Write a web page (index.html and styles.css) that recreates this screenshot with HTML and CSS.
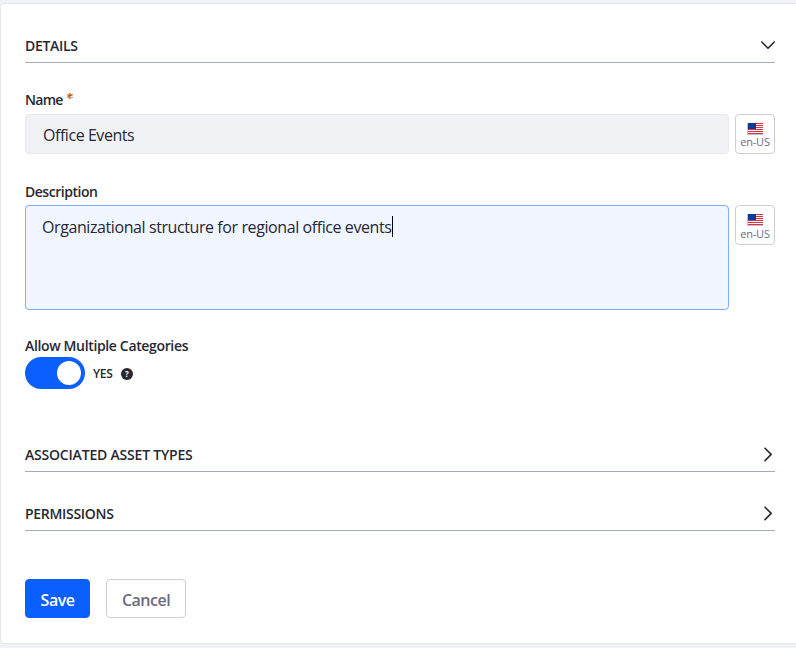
FILE: index.html
```
<!DOCTYPE html>
<html lang="en">
<head>
<meta charset="utf-8">
<title>Details</title>
<link rel="stylesheet" href="styles.css">
</head>
<body>
<svg class="defs" width="0" height="0" aria-hidden="true">
  <symbol id="flag" viewBox="0 0 16 12">
    <path fill="#fff" d="M0 0h16v12H0z"/>
    <path fill="#d9333f" d="M1 0h15v1H1zM1 2h15v1H1zM1 4h15v1H1zM1 6h15v1H1zM1 8h15v1H1zM1 10h15v1H1z"/>
    <path fill="#0a3a9a" d="M1 0h8v6H1z"/>
    <path fill="#b7c3d3" d="M0 0h1v12H0zM1 11h15v1H1z"/>
  </symbol>
</svg>
<form class="card">
  <div class="panel-header details"><span class="t-details">DETAILS</span>
    <svg class="chevron" viewBox="0 0 16 16"><path d="M1.800 5 8 11.200 14.200 5"/></svg>
  </div>
  <div class="label name-label"><span class="t-name">Name</span><svg class="star" viewBox="0 0 6 6"><path d="M3 0v6M.3 1.500l5.400 3M5.700 1.500l-5.400 3"/></svg></div>
  <div class="row">
    <div class="field input"><span class="t-office">Office Events</span></div>
    <button type="button" class="locale"><svg class="flag"><use href="#flag"/></svg><span>en-US</span></button>
  </div>
  <div class="label desc-label"><span class="t-desc">Description</span></div>
  <div class="row">
    <div class="field textarea"><span class="t-body">Organizational structure for regional office events</span><i class="caret"></i></div>
    <button type="button" class="locale second"><svg class="flag"><use href="#flag"/></svg><span>en-US</span></button>
  </div>
  <div class="label multi-label"><span class="t-multi">Allow Multiple Categories</span></div>
  <div class="toggle-row">
    <span class="toggle"><span class="knob"></span></span>
    <span class="yes">YES</span>
    <span class="help">?</span>
  </div>
  <div class="panel-header assets"><span class="t-assets">ASSOCIATED ASSET TYPES</span>
    <svg class="chevron" viewBox="0 0 16 16"><path d="M5 2.200l6.200 6.200L5 14.600"/></svg>
  </div>
  <div class="panel-header permissions"><span class="t-perm">PERMISSIONS</span>
    <svg class="chevron" viewBox="0 0 16 16"><path d="M5 2.200l6.200 6.200L5 14.600"/></svg>
  </div>
  <div class="actions">
    <button type="button" class="btn save"><span class="t-save">Save</span></button>
    <button type="button" class="btn cancel"><span class="t-cancel">Cancel</span></button>
  </div>
</form>
</body>
</html>
```
FILE: styles.css
```
* { box-sizing: border-box; }
html, body { margin: 0; height: 648px; overflow: hidden; }
body { background: #f1f2f5; color: #272833; font-family: "Open Sans", "Noto Sans", sans-serif; padding-top: 3px; }
.defs { position: absolute; }
.card { width: 800px; height: 641px; background: #fff; border: 1px solid #e7e7ed; border-radius: 4px; padding: 24px; }
.panel-header { display: flex; justify-content: space-between; align-items: center; height: 35px; padding-top: 2px; border-bottom: 1px solid #a7a9bc; font-size: 14px; font-weight: 570; line-height: 20px; white-space: nowrap; }
.chevron { width: 16px; height: 16px; margin: -3px -1px 0 0; fill: none; stroke: #272833; stroke-width: 1.600; stroke-linecap: round; stroke-linejoin: round; }
.label { display: flex; height: 20px; font-size: 14px; font-weight: 580; line-height: 20px; white-space: nowrap; }
.name-label { margin-top: 27px; margin-bottom: 4px; }
.desc-label { margin-top: 28px; margin-bottom: 3px; }
.multi-label { margin-top: 26px; margin-bottom: 1px; }
.t-details { letter-spacing: -.32px; }
.t-name { letter-spacing: -.7px; }
.t-office { letter-spacing: -.45px; }
.t-desc { letter-spacing: -.48px; }
.t-body { letter-spacing: -.41px; }
.t-multi { letter-spacing: -.35px; }
.t-assets { letter-spacing: -.2px; }
.t-perm { letter-spacing: -.3px; }
.t-save, .t-cancel { letter-spacing: -.5px; }
.star { width: 6px; height: 6px; margin: 3px 0 0 4px; stroke: #b95000; stroke-width: 1.200; }
.row { display: flex; align-items: flex-start; gap: 6px; }
.field { flex: 1; display: flex; align-items: center; border: 1px solid #e7e7ed; border-radius: 4px; font-size: 16px; line-height: 24px; white-space: nowrap; }
.input { height: 40px; padding: 2px 17px 0; background: #f1f2f5; }
.textarea { height: 105px; align-items: flex-start; padding: 9px 16px; background: #f0f5ff; border-color: #80acff; }
.caret { width: 1px; height: 21px; margin-top: 1px; background: #000; }
.locale { display: flex; flex-direction: column; align-items: center; width: 40px; height: 40px; padding: 8px 0 0; background: #fff; border: 1px solid #cdced9; border-radius: 4px; color: #6b6c7e; font: 11px/14px "Open Sans", "Noto Sans", sans-serif; letter-spacing: -.2px; }
.second span { margin-top: 1px; }
.flag { display: block; flex: none; width: 16px; height: 12px; }
.toggle-row { display: flex; align-items: center; height: 32px; }
.toggle { display: flex; align-items: center; justify-content: flex-end; width: 60px; height: 32px; padding-right: 4px; border-radius: 16px; background: #0b5fff; }
.knob { width: 24px; height: 24px; border-radius: 50%; background: #fff; }
.yes { width: 20px; margin-left: 8px; font-size: 12px; font-weight: 560; letter-spacing: -.3px; }
.help { width: 12px; height: 12px; margin: 1px 0 0 8px; border-radius: 50%; background: #272833; color: #fff; font-size: 8px; font-weight: 700; line-height: 12px; text-align: center; }
.assets { margin-top: 48px; }
.permissions { margin-top: 24px; }
.actions { display: flex; gap: 16px; margin-top: 48px; }
.btn { height: 39px; padding: 2px 0 0; border: 1px solid #0b5fff; border-radius: 4px; font: 600 16px/24px "Open Sans", "Noto Sans", sans-serif; }
.save { width: 65px; background: #0b5fff; color: #fff; }
.cancel { width: 80px; background: #fff; border-color: #cdced9; color: #6b6c7e; }
```
